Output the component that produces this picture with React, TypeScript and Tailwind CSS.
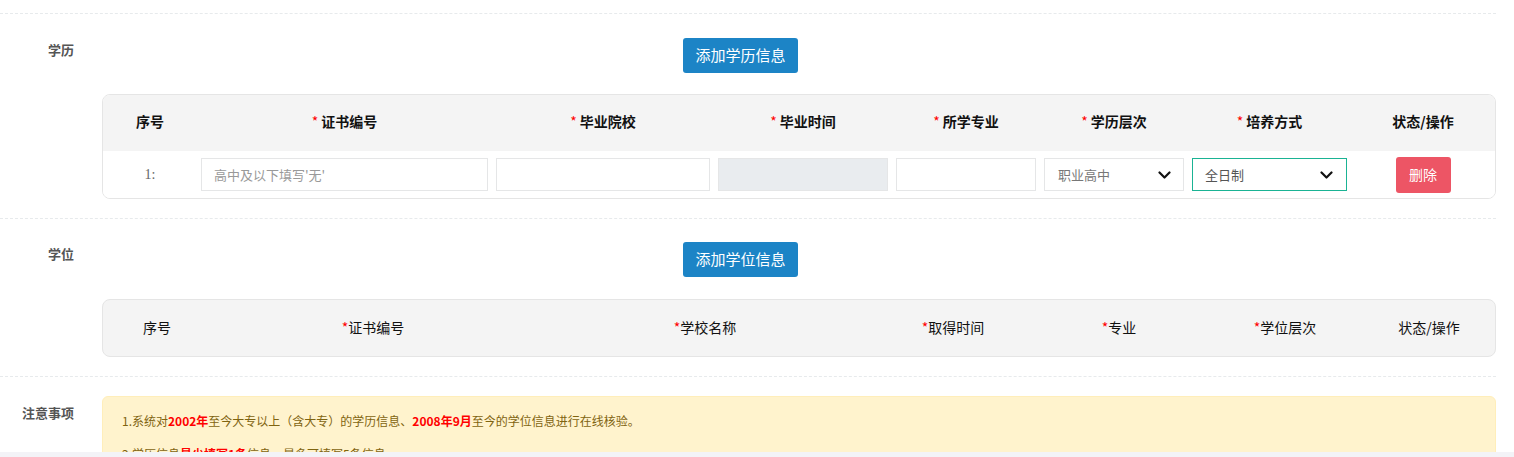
import React from "react";

const FONT = { fontFamily: '"Noto Sans CJK SC", "Noto Sans", "Liberation Sans", sans-serif' };

function Chevron() {
  return (
    <svg width="13" height="8" viewBox="0 0 13 8" className="shrink-0">
      <polyline points="1.5,1.5 6.5,6.5 11.5,1.5" fill="none" stroke="#111" strokeWidth="2.2" strokeLinecap="round" strokeLinejoin="round" />
    </svg>
  );
}

function Req({ children, bold }: { children: React.ReactNode; bold?: boolean }) {
  return (
    <span className={bold ? "font-bold text-[#111]" : "text-[#111]"}>
      <span className="text-[#f00] font-normal">*</span>
      {bold ? " " : ""}
      {children}
    </span>
  );
}

export default function App() {
  return (
    <div style={FONT} className="w-[1514px] h-[457px] overflow-hidden bg-white text-[#333]">
      <div className="h-[452px] overflow-hidden">
        <div className="w-[1496px]">
          <div className="h-[14px] border-b border-dashed border-[#e7eaec]" />

          {/* 学历 */}
          <div className="flex pt-[24px] pb-[19px] border-b border-dashed border-[#e7eaec]">
            <div className="w-[74px] text-right mt-[2px] text-[13px] leading-[20px] font-bold text-[#555]">学历</div>
            <div className="ml-[28px] w-[1394px]">
              <div className="ml-[581px] w-[115px] h-[35px] flex items-center justify-center rounded-[3px] bg-[#1c84c6] text-white text-[15px]">
                添加学历信息
              </div>
              <div className="mt-[21px] border border-[#e5e5e5] rounded-[8px] overflow-hidden">
                <div className="grid grid-cols-[94px_295px_222px_178px_148px_148px_163px_144px] h-[56px] pb-[4px] bg-[#f4f4f4] items-center text-center text-[14px]">
                  <span className="font-bold text-[#111]">序号</span>
                  <Req bold>证书编号</Req>
                  <Req bold>毕业院校</Req>
                  <Req bold>毕业时间</Req>
                  <Req bold>所学专业</Req>
                  <Req bold>学历层次</Req>
                  <Req bold>培养方式</Req>
                  <span className="font-bold text-[#111]">状态/操作</span>
                </div>
                <div className="grid grid-cols-[94px_295px_222px_178px_148px_148px_163px_144px] h-[47px] items-center bg-white">
                  <div className="text-center text-[14px] text-[#666]" style={{ fontFamily: '"Liberation Serif", "Noto Sans CJK SC", serif' }}>1:</div>
                  <div className="px-[4px]">
                    <div className="h-[33px] border border-[#e5e6e7] flex items-center px-[12px] text-[13px] text-[#999]">高中及以下填写'无'</div>
                  </div>
                  <div className="px-[4px]">
                    <div className="h-[33px] border border-[#e5e6e7]" />
                  </div>
                  <div className="px-[4px]">
                    <div className="h-[33px] border border-[#e5e6e7] bg-[#e9ecef]" />
                  </div>
                  <div className="px-[4px]">
                    <div className="h-[33px] border border-[#e5e6e7]" />
                  </div>
                  <div className="px-[4px]">
                    <div className="h-[33px] border border-[#e5e6e7] flex items-center justify-between pl-[13px] pr-[12px] text-[13px] text-[#777]">
                      <span>职业高中</span>
                      <Chevron />
                    </div>
                  </div>
                  <div className="px-[4px]">
                    <div className="h-[33px] border border-[#1ab394] flex items-center justify-between pl-[12px] pr-[13px] text-[13px] text-[#555]">
                      <span>全日制</span>
                      <Chevron />
                    </div>
                  </div>
                  <div className="flex justify-center">
                    <div className="w-[55px] h-[36px] rounded-[3px] bg-[#ed5565] text-white text-[14px] flex items-center justify-center">删除</div>
                  </div>
                </div>
              </div>
            </div>
          </div>

          {/* 学位 */}
          <div className="flex pt-[23px] pb-[19px] border-b border-dashed border-[#e7eaec]">
            <div className="w-[74px] text-right mt-[2px] text-[13px] leading-[20px] font-bold text-[#555]">学位</div>
            <div className="ml-[28px] w-[1394px]">
              <div className="ml-[581px] w-[115px] h-[35px] flex items-center justify-center rounded-[3px] bg-[#1c84c6] text-white text-[15px]">
                添加学位信息
              </div>
              <div className="mt-[22px] border border-[#e5e5e5] rounded-[8px] overflow-hidden bg-[#f4f4f4]">
                <div className="grid grid-cols-[108px_324px_340px_156px_176px_156px_132px] h-[56px] pb-[2px] items-center text-center text-[14px]">
                  <span className="text-[#111]">序号</span>
                  <Req>证书编号</Req>
                  <Req>学校名称</Req>
                  <Req>取得时间</Req>
                  <Req>专业</Req>
                  <Req>学位层次</Req>
                  <span className="text-[#111]">状态/操作</span>
                </div>
              </div>
            </div>
          </div>

          {/* 注意事项 */}
          <div className="flex pt-[19px]">
            <div className="w-[74px] text-right mt-[7px] text-[13px] leading-[20px] font-bold text-[#555]">注意事项</div>
            <div className="ml-[28px] w-[1394px] bg-[#fff3cd] border border-[#ffeeba] rounded-[6px] pt-[14px] pb-[12px] px-[19px] text-[12px] leading-[20px] text-[#7f6410] h-[80px]">
              <p>
                1.系统对<b className="text-[#f00]">2002年</b>至今大专以上（含大专）的学历信息、<b className="text-[#f00]">2008年9月</b>至今的学位信息进行在线核验。
              </p>
              <p className="mt-[13px]">
                2.学历信息<b className="text-[#f00]">最少填写1条</b>信息，最多可填写5条信息。
              </p>
            </div>
          </div>
        </div>
      </div>
      <div className="h-[5px] bg-[#f3f3f7]" />
    </div>
  );
}
